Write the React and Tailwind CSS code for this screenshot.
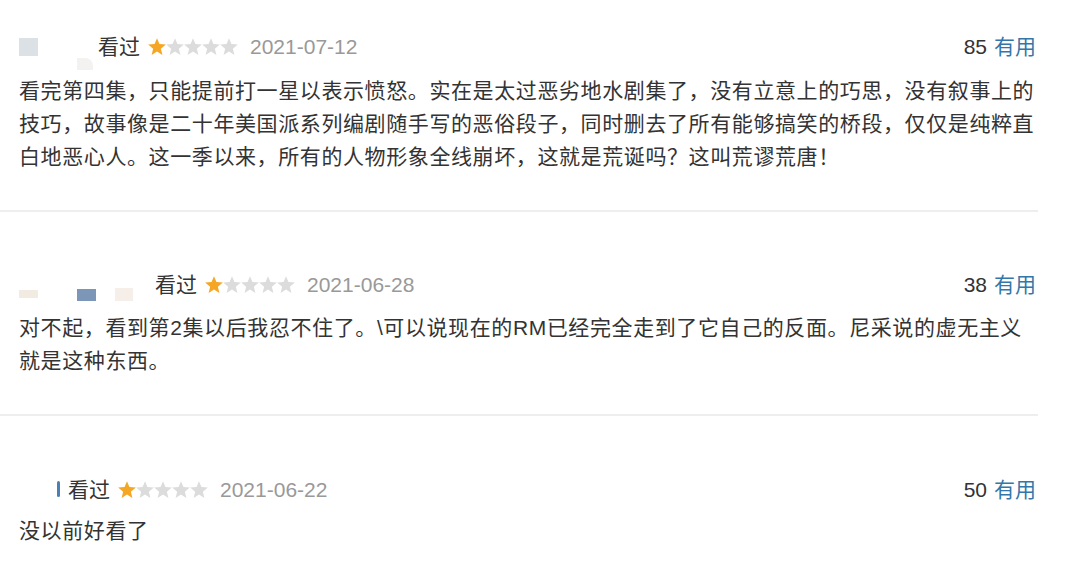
import React from "react";

const FONT = { fontFamily: '"Liberation Sans", "Noto Sans CJK SC", sans-serif' };

function Star({ on }) {
  return (
    <svg width="18" height="18" viewBox="0 0 20 20" className="block">
      <path
        d="M10 0.3L12.7 6.6L19.8 7.2L14.3 11.9L16 18.9L10 15.1L4 18.9L5.7 11.9L0.2 7.2L7.3 6.6Z"
        fill={on ? "#f5a623" : "#dcdcdc"}
      />
    </svg>
  );
}

function Stars() {
  return (
    <div className="flex items-center">
      <Star on />
      <Star />
      <Star />
      <Star />
      <Star />
    </div>
  );
}

function Header({ avatar, date, votes }) {
  return (
    <div className="flex h-[33px] items-center justify-between pr-[2px]">
      <div className="flex h-full items-center">
        {avatar}
        <span className="text-[#333]">看过</span>
        <div className="ml-[8px]">
          <Stars />
        </div>
        <span className="ml-[12px] text-[#999]">{date}</span>
      </div>
      <div className="flex items-center">
        <span className="text-[#333]">{votes}</span>
        <span className="ml-[7px] text-[#3377aa]">有用</span>
      </div>
    </div>
  );
}

const Avatar1 = (
  <div className="relative h-full w-[98px]">
    <div className="absolute left-[19px] top-[8px] h-[18px] w-[19px] bg-[#dbe1e5]" />
    <div className="absolute left-[77px] top-[28px] h-[12px] w-[16px] rounded-tr-[8px] bg-[#f4f2f1]" />
  </div>
);

const Avatar2 = (
  <div className="relative h-full w-[155px]">
    <div className="absolute left-[19px] top-[22px] h-[8px] w-[19px] bg-[#f1ebe1]" />
    <div className="absolute left-[77px] top-[21px] h-[12px] w-[19px] bg-[#7b96b6]" />
    <div className="absolute left-[115px] top-[20px] h-[13px] w-[18px] bg-[#f5eee9]" />
  </div>
);

const Avatar3 = (
  <div className="relative h-full w-[68px]">
    <div className="absolute left-[57px] top-[8px] h-[16px] w-[3px] rounded-full bg-[#4a80b3]" />
  </div>
);

function Body({ children, className = "" }) {
  return (
    <p
      className={"w-[1038px] pl-[19px] text-[21px] leading-[33px] tracking-[0.6px] text-[#333] " + className}
    >
      {children}
    </p>
  );
}

export default function App() {
  return (
    <div className="h-[581px] w-[1080px] overflow-hidden bg-white text-[21px]" style={FONT}>
      <div className="w-[1038px]">
        <section className="pt-[30px] pb-[37px]">
          <Header avatar={Avatar1} date="2021-07-12" votes="85" />
          <Body className="mt-[11px]">
            看完第四集，只能提前打一星以表示愤怒。实在是太过恶劣地水剧集了，没有立意上的巧思，没有叙事上的技巧，故事像是二十年美国派系列编剧随手写的恶俗段子，同时删去了所有能够搞笑的桥段，仅仅是纯粹直白地恶心人。这一季以来，所有的人物形象全线崩坏，这就是荒诞吗？这叫荒谬荒唐！
          </Body>
        </section>
        <div className="h-[2px] bg-[#eeeeee]" />
        <section className="pt-[56px] pb-[37px]">
          <Header avatar={Avatar2} date="2021-06-28" votes="38" />
          <Body className="mt-[10px]">
            对不起，看到第2集以后我忍不住了。\可以说现在的RM已经完全走到了它自己的反面。尼采说的虚无主义就是这种东西。
          </Body>
        </section>
        <div className="h-[2px] bg-[#eeeeee]" />
        <section className="pt-[57px]">
          <Header avatar={Avatar3} date="2021-06-22" votes="50" />
          <Body className="mt-[8px]">没以前好看了</Body>
        </section>
      </div>
    </div>
  );
}
